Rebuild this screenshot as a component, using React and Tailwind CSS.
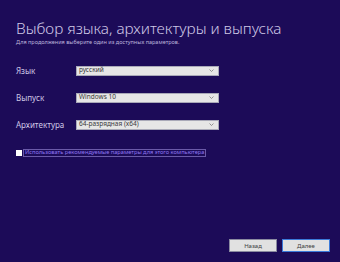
import React from "react";

function Select({ value }) {
  return (
    <div className="flex h-[10px] w-[143px] items-center justify-between border border-[#a9a9b8] bg-[#e6e6e6] pl-[2px] pr-[4px]">
      <span className="text-[6.5px] leading-none text-[#383838]">{value}</span>
      <svg width="5" height="3" viewBox="0 0 5 3" className="text-[#707070]">
        <path d="M0.5 0.5 L2.5 2.5 L4.5 0.5" fill="none" stroke="currentColor" strokeWidth="0.7" />
      </svg>
    </div>
  );
}

function Row({ label, value }) {
  return (
    <div className="flex h-[10px] items-center">
      <span className="w-[60px] text-[8px] leading-none text-[#cfc8e6]">{label}</span>
      <Select value={value} />
    </div>
  );
}

export default function App() {
  return (
    <div
      className="flex h-[262px] w-[340px] flex-col bg-[#1c0b58] pl-[16px]"
      style={{ fontFamily: '"Noto Sans", "Open Sans", sans-serif' }}
    >
      <div className="mt-[19px] text-[15.3px] font-light leading-[18px] text-[#cfc8e6]">
        Выбор языка, архитектуры и выпуска
      </div>
      <div className="mt-[3px] text-[5.5px] leading-none text-[#bdb5dc]">
        Для продолжения выберите один из доступных параметров.
      </div>
      <div className="mt-[20px] flex flex-col gap-[17px]">
        <Row label="Язык" value="русский" />
        <Row label="Выпуск" value="Windows 10" />
        <Row label="Архитектура" value="64-разрядная (x64)" />
      </div>
      <div className="mt-[19px] flex items-center">
        <div className="h-[6px] w-[6px] bg-white" />
        <div className="ml-[1px] flex h-[8px] items-center border border-[#6a5aa8] px-[1px]">
          <span className="text-[5.65px] leading-none text-[#8f78f2]">
            Использовать рекомендуемые параметры для этого компьютера
          </span>
        </div>
      </div>
      <div className="mt-auto mb-[10px] mr-[10px] flex justify-end gap-[5px]">
        <button className="flex h-[13px] w-[48px] items-center justify-center border border-[#8a8aa0] bg-[#e1e1e1] text-[6px] leading-none text-[#404040]">
          Назад
        </button>
        <button className="flex h-[13px] w-[48px] items-center justify-center border border-[#3b7ad9] bg-[#e1e1e1] text-[6px] leading-none text-[#404040]">
          Далее
        </button>
      </div>
    </div>
  );
}
